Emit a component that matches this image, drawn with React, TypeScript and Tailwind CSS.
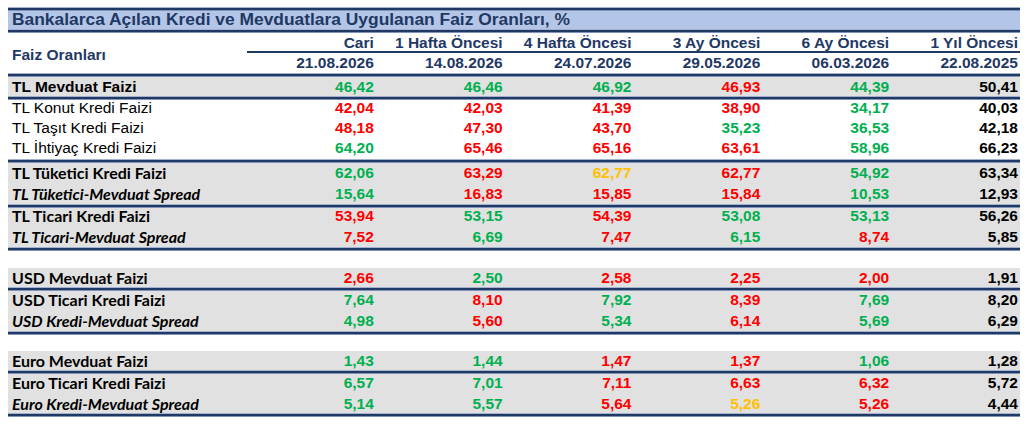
type Tone = "g" | "r" | "o" | "k";
type Kind = "ab" | "ar" | "cb" | "ci";

interface RowData {
  label: string;
  kind: Kind;
  h: string;
  vals: string;
}

interface Block {
  gray: boolean;
  rows: RowData[];
}

const toneClass: Record<Tone, string> = {
  g: "text-[#00b050]",
  r: "text-[#ff0000]",
  o: "text-[#ffc000]",
  k: "text-black",
};

const kindClass: Record<Kind, string> = {
  ab: "font-['Liberation_Sans',Arial,sans-serif] font-bold text-[15.5px]",
  ar: "font-['Liberation_Sans',Arial,sans-serif] text-[15.5px]",
  cb: "font-['Lato',sans-serif] font-bold text-[16px]",
  ci: "font-['Lato',sans-serif] font-bold italic text-[16px]",
};

const columns = [
  ["Cari", "21.08.2026"],
  ["1 Hafta Öncesi", "14.08.2026"],
  ["4 Hafta Öncesi", "24.07.2026"],
  ["3 Ay Öncesi", "29.05.2026"],
  ["6 Ay Öncesi", "06.03.2026"],
  ["1 Yıl Öncesi", "22.08.2025"],
];

// blocks sit between the double rules; gaps are the white spacers between currencies
const layout: (Block | { gap: string })[] = [
  {
    gray: true,
    rows: [{ label: "TL Mevduat Faizi", kind: "ab", h: "h-[19px]", vals: "46,42g 46,46g 46,92g 46,93r 44,39g 50,41k" }],
  },
  {
    gray: false,
    rows: [
      { label: "TL Konut Kredi Faizi", kind: "ar", h: "h-[20px] pb-[4px]", vals: "42,04r 42,03r 41,39r 38,90r 34,17g 40,03k" },
      { label: "TL Taşıt Kredi Faizi", kind: "ar", h: "h-[20px] pb-[4px]", vals: "48,18r 47,30r 43,70r 35,23g 36,53g 42,18k" },
      { label: "TL İhtiyaç Kredi Faizi", kind: "ar", h: "h-[19px] pb-[3px]", vals: "64,20g 65,46r 65,16r 63,61r 58,96g 66,23k" },
    ],
  },
  {
    gray: true,
    rows: [
      { label: "TL Tüketici Kredi Faizi", kind: "cb", h: "h-[21px] pb-[2px]", vals: "62,06g 63,29r 62,77o 62,77r 54,92g 63,34k" },
      { label: "TL Tüketici-Mevduat Spread", kind: "ci", h: "h-[20px]", vals: "15,64g 16,83r 15,85r 15,84r 10,53g 12,93k" },
    ],
  },
  {
    gray: true,
    rows: [
      { label: "TL Ticari Kredi Faizi", kind: "cb", h: "h-[20px] pb-[4px]", vals: "53,94r 53,15g 54,39r 53,08g 53,13g 56,26k" },
      { label: "TL Ticari-Mevduat Spread", kind: "ci", h: "h-[19px] pb-[2px]", vals: "7,52r 6,69g 7,47r 6,15g 8,74r 5,85k" },
    ],
  },
  { gap: "h-[17px]" },
  {
    gray: true,
    rows: [{ label: "USD Mevduat Faizi", kind: "cb", h: "h-[19px]", vals: "2,66r 2,50g 2,58r 2,25r 2,00r 1,91k" }],
  },
  {
    gray: true,
    rows: [
      { label: "USD Ticari Kredi Faizi", kind: "cb", h: "h-[20px] pb-[2px]", vals: "7,64g 8,10r 7,92g 8,39r 7,69g 8,20k" },
      { label: "USD Kredi-Mevduat Spread", kind: "ci", h: "h-[20px]", vals: "4,98g 5,60r 5,34g 6,14r 5,69g 6,29k" },
    ],
  },
  { gap: "h-[16px]" },
  {
    gray: true,
    rows: [{ label: "Euro Mevduat Faizi", kind: "cb", h: "h-[19px]", vals: "1,43g 1,44g 1,47r 1,37r 1,06g 1,28k" }],
  },
  {
    gray: true,
    rows: [
      { label: "Euro Ticari Kredi Faizi", kind: "cb", h: "h-[20px] pb-[2px]", vals: "6,57g 7,01g 7,11r 6,63r 6,32r 5,72k" },
      { label: "Euro Kredi-Mevduat Spread", kind: "ci", h: "h-[19px]", vals: "5,14g 5,57g 5,64r 5,26o 5,26r 4,44k" },
    ],
  },
];

const grid = "grid grid-cols-[239px_repeat(6,minmax(0,1fr))] items-center";
const numFont = "font-['Liberation_Sans',Arial,sans-serif] font-bold text-[15.5px]";

// Excel style double bottom border
function Rule() {
  return (
    <div className="flex flex-col">
      <div className="h-px bg-[#a3b1cf]" />
      <div className="h-[2px] bg-[#1f3864]" />
      <div className="h-px bg-[#7f93bd]" />
    </div>
  );
}

function DataRow({ row }: { row: RowData }) {
  const vals = row.vals.split(" ").map((v) => [v.slice(0, -1), v.slice(-1) as Tone] as const);
  return (
    <div className={`${grid} ${row.h} leading-none`}>
      <span className={`pl-1 text-black whitespace-nowrap ${kindClass[row.kind]}`}>{row.label}</span>
      {vals.map(([num, t], i) => (
        <span key={i} className={`text-right pr-[2px] ${numFont} ${toneClass[t]}`}>
          {num}
        </span>
      ))}
    </div>
  );
}

export default function App() {
  return (
    <div className="w-[1024px] h-[426px] bg-white overflow-hidden pt-[7px]">
      <div className="w-[1012px] ml-2 flex flex-col">
        <Rule />
        {/* Title band */}
        <div className="h-[18px] bg-[#b4c6e7] flex items-center pl-1">
          <span className="font-['Liberation_Sans',Arial,sans-serif] font-bold text-[17.4px] leading-none text-[#1f3864] whitespace-nowrap">
            Bankalarca Açılan Kredi ve Mevduatlara Uygulanan Faiz Oranları, %
          </span>
        </div>
        <Rule />

        {/* Column headers */}
        <div className="h-[40px] grid grid-cols-[239px_1fr]">
          <div className="flex items-center pl-1 pt-[3px]">
            <span className={`${numFont} text-[#1f3864] leading-none`}>Faiz Oranları</span>
          </div>
          <div className="flex flex-col">
            <div className="h-[20px] grid grid-cols-6 items-center border-b-[2px] border-[#1f3864]">
              {columns.map(([name]) => (
                <span key={name} className={`text-right pr-[2px] leading-none pt-[2px] ${numFont} text-[#1f3864]`}>
                  {name}
                </span>
              ))}
            </div>
            <div className="flex-1 grid grid-cols-6 items-center">
              {columns.map(([name, date]) => (
                <span key={name} className={`text-right pr-[2px] leading-none ${numFont} text-[#1f3864]`}>
                  {date}
                </span>
              ))}
            </div>
          </div>
        </div>
        <Rule />

        {layout.map((block, i) =>
          "gap" in block ? (
            <div key={i} className={block.gap} />
          ) : (
            <div key={i} className="flex flex-col">
              <div className={block.gray ? "bg-[#e1e1e1]" : "bg-white"}>
                {block.rows.map((r) => (
                  <DataRow key={r.label} row={r} />
                ))}
              </div>
              <Rule />
            </div>
          )
        )}
      </div>
    </div>
  );
}
